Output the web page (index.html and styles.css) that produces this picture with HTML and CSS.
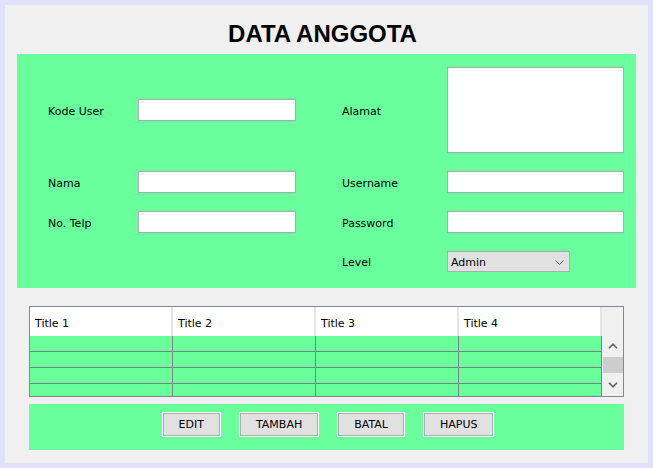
FILE: index.html
```html
<!DOCTYPE html>
<html>
<head>
<meta charset="utf-8">
<link rel="stylesheet" href="styles.css">
</head>
<body>
<div class="window">
  <h1 class="title">DATA ANGGOTA</h1>
  <div class="form">
    <span class="lbl">Kode User</span>
    <div class="field"></div>
    <span class="lbl">Alamat</span>
    <div class="area"></div>

    <span class="lbl">Nama</span>
    <div class="field"></div>
    <span class="lbl">Username</span>
    <div class="field wide"></div>

    <span class="lbl">No. Telp</span>
    <div class="field"></div>
    <span class="lbl">Password</span>
    <div class="field wide"></div>

    <span></span>
    <span></span>
    <span class="lbl">Level</span>
    <div class="combo">
      <span>Admin</span>
      <svg class="chev" width="9" height="5" viewBox="0 0 9 5"><polyline points="0.5,0.5 4.5,4.5 8.5,0.5" fill="none" stroke="#5a5a5a" stroke-width="1"/></svg>
    </div>
  </div>

  <div class="table">
    <div class="grid">
      <div class="thead">
        <div class="th">Title 1</div>
        <div class="th">Title 2</div>
        <div class="th">Title 3</div>
        <div class="th">Title 4</div>
      </div>
      <div class="tr"><div class="td"></div><div class="td"></div><div class="td"></div><div class="td"></div></div>
      <div class="tr"><div class="td"></div><div class="td"></div><div class="td"></div><div class="td"></div></div>
      <div class="tr"><div class="td"></div><div class="td"></div><div class="td"></div><div class="td"></div></div>
      <div class="tr"><div class="td"></div><div class="td"></div><div class="td"></div><div class="td"></div></div>
    </div>
    <div class="sb">
      <div class="sb-corner"></div>
      <div class="sb-btn">
        <svg width="10" height="6" viewBox="0 0 10 6"><polyline points="1,5.2 5,1.2 9,5.2" fill="none" stroke="#606060" stroke-width="1.6"/></svg>
      </div>
      <div class="sb-thumb"></div>
      <div class="sb-btn down">
        <svg width="10" height="6" viewBox="0 0 10 6"><polyline points="1,0.8 5,4.8 9,0.8" fill="none" stroke="#606060" stroke-width="1.6"/></svg>
      </div>
    </div>
  </div>

  <div class="buttons">
    <button class="btn">EDIT</button>
    <button class="btn">TAMBAH</button>
    <button class="btn">BATAL</button>
    <button class="btn">HAPUS</button>
  </div>
</div>
</body>
</html>
```

FILE: styles.css
```css
body {
  margin: 0;
}

.window {
  width: 653px;
  height: 468px;
  box-sizing: border-box;
  border: 5px solid #e1e1fc;
  background: #f0f0f0;
  font-family: "DejaVu Sans", sans-serif;
  font-size: 11px;
  color: #000;
}

.title {
  margin: 0;
  height: 49px;
  box-sizing: border-box;
  padding: 15px 8px 0 0;
  font-family: "Liberation Sans", Arial, sans-serif;
  font-weight: bold;
  font-size: 24px;
  line-height: 28px;
  text-align: center;
}

.form {
  margin: 0 12px;
  background: #68ff9c;
  display: grid;
  grid-template-columns: 90px 204px 105px 177px;
  row-gap: 18px;
  padding: 13px 12px 16px 31px;
  align-items: center;
}

.lbl {
  line-height: 14px;
  padding-top: 3px;
}

.field {
  width: 158px;
  height: 22px;
  box-sizing: border-box;
  border: 1px solid #abadb3;
  background: #fff;
}

.field.wide {
  width: 177px;
}

.area {
  width: 177px;
  height: 86px;
  box-sizing: border-box;
  border: 1px solid #abadb3;
  background: #fff;
}

.combo {
  width: 123px;
  height: 21px;
  box-sizing: border-box;
  border: 1px solid #acacac;
  background: #e1e1e1;
  display: flex;
  align-items: center;
  justify-content: space-between;
  padding: 1px 5px 0 3px;
}

.chev {
  display: block;
}

.table {
  margin: 18px 24px 0;
  height: 91px;
  box-sizing: border-box;
  border: 1px solid #828790;
  display: flex;
  overflow: hidden;
}

.grid {
  width: 572px;
  overflow: hidden;
}

.thead {
  display: flex;
  height: 29px;
  background: #fff;
}

.th {
  width: 143px;
  box-sizing: border-box;
  border-right: 2px solid #e5e5e5;
  padding-left: 5px;
  display: flex;
  align-items: center;
  padding-top: 3px;
}

.tr {
  display: flex;
  height: 16px;
  box-sizing: border-box;
  border-bottom: 1px solid #808080;
  background: #68ff9c;
}

.td {
  width: 143px;
  box-sizing: border-box;
  border-right: 1px solid #808080;
}

.sb {
  width: 21px;
  background: #f0f0f0;
  display: flex;
  flex-direction: column;
}

.sb-corner {
  height: 29px;
  flex: none;
}

.sb-btn {
  height: 20px;
  flex: none;
  display: flex;
  align-items: center;
  justify-content: center;
}

.sb-btn svg {
  display: block;
}

.sb-thumb {
  height: 16px;
  flex: none;
  margin: 1px 0 0 1px;
  background: #cdcdcd;
}

.sb-btn.down {
  flex: 1;
}

.buttons {
  margin: 7px 24px 0;
  height: 46px;
  box-sizing: border-box;
  background: #68ff9c;
  display: flex;
  justify-content: center;
  align-items: flex-start;
  gap: 18px;
  padding: 8px 0 0 3px;
}

.btn {
  height: 25px;
  margin: 0;
  padding: 0 16px;
  border: 1px solid #fff;
  box-shadow: inset 0 0 0 1px #adadad;
  background: #e1e1e1;
  font-family: "DejaVu Sans", sans-serif;
  font-size: 11px;
  color: #000;
}
```
